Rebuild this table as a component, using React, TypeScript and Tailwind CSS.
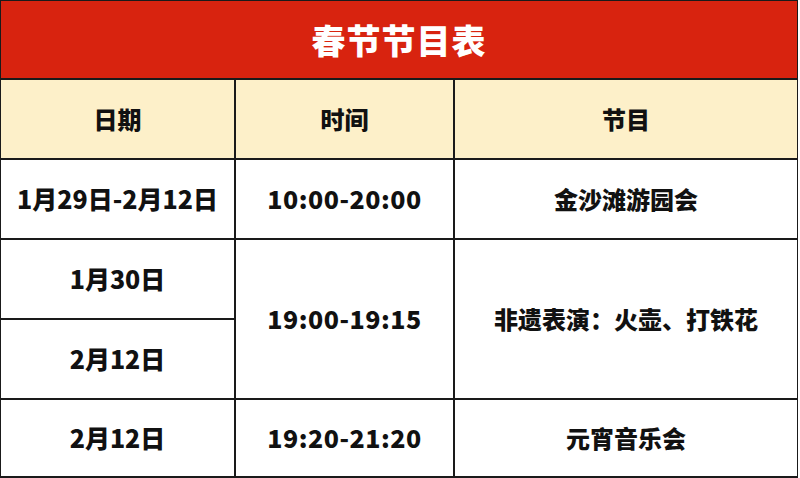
import React from "react";

const font = { fontFamily: '"Noto Sans CJK SC", "Noto Sans", sans-serif' };

function Cell({ children, className = "bg-white text-[24px]" }: { children?: React.ReactNode; className?: string }) {
  return (
    <div className={`flex items-center justify-center font-black text-[#111] ${className}`}>
      {children}
    </div>
  );
}

const date = "bg-white text-[25px]";
const time = "bg-white text-[25px] tracking-[0.5px]";
const prog = "bg-white text-[24px]";
const head = "bg-[#fdf0c9] text-[24px]";

export default function App() {
  return (
    <div className="w-[800px] h-[478px] bg-white" style={font}>
      <div className="w-[798px] h-[478px] bg-[#1a1a1a] p-px grid grid-cols-[233px_217px_1fr] grid-rows-[77px_78px_78px_78px_78px_76px] gap-[2px]">
        <div className="col-span-3 flex items-center justify-center bg-[#d8230f] text-white text-[34px] font-black tracking-[1px]">
          春节节目表
        </div>
        <Cell className={head}>日期</Cell>
        <Cell className={head}>时间</Cell>
        <Cell className={head}>节目</Cell>

        <Cell className={date}>1月29日-2月12日</Cell>
        <Cell className={time}>10:00-20:00</Cell>
        <Cell className={prog}>金沙滩游园会</Cell>

        <Cell className={date}>1月30日</Cell>
        <Cell className={`${time} row-span-2`}>19:00-19:15</Cell>
        <Cell className={`${prog} row-span-2`}>非遗表演：火壶、打铁花</Cell>

        <Cell className={date}>2月12日</Cell>

        <Cell className={date}>2月12日</Cell>
        <Cell className={time}>19:20-21:20</Cell>
        <Cell className={prog}>元宵音乐会</Cell>
      </div>
    </div>
  );
}
